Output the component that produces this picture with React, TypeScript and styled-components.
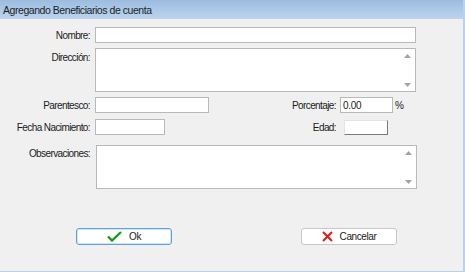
import React from 'react';
import styled, { createGlobalStyle } from 'styled-components';

const GlobalStyle = createGlobalStyle`
  html, body {
    margin: 0;
    padding: 0;
    background: #f0f0f0;
  }
  * {
    box-sizing: border-box;
  }
`;

const Window = styled.div`
  width: 465px;
  height: 272px;
  display: flex;
  flex-direction: column;
  background: #f0f0f0;
  border-right: 2px solid #b9d1ea;
  border-bottom: 1px solid #b9d1ea;
  font-family: 'Liberation Sans', Arial, sans-serif;
  color: #1b1b1b;
`;

const TitleBar = styled.div`
  height: 19px;
  display: flex;
  align-items: center;
  padding-left: 3px;
  background: linear-gradient(to bottom, #9cbcdf, #bcd5ee);
  font-size: 10.5px;
  letter-spacing: -0.45px;
  color: #1a1f26;
`;

const Form = styled.div`
  display: flex;
  flex-direction: column;
  padding-top: 8px;
`;

const Row = styled.div<{ $gap: number; $align?: string }>`
  display: flex;
  align-items: ${({ $align }) => $align || 'center'};
  margin-top: ${({ $gap }) => $gap}px;
`;

const Label = styled.div<{ $width?: number; $pad?: number }>`
  width: ${({ $width }) => $width ?? 90}px;
  text-align: right;
  flex-shrink: 0;
  font-size: 10px;
  letter-spacing: -0.6px;
  padding-top: ${({ $pad }) => $pad ?? 0}px;
`;

const Input = styled.input<{ $width: number; $ml?: number }>`
  width: ${({ $width }) => $width}px;
  height: 16px;
  margin: 0 0 0 ${({ $ml }) => $ml ?? 5}px;
  padding: 0 2px;
  border: 1px solid #b9b9b9;
  background: #fff;
  font-family: 'Liberation Sans', Arial, sans-serif;
  font-size: 10px;
  letter-spacing: -0.3px;
  color: #1b1b1b;
  outline: none;
`;

const Box = styled.div<{ $width: number; $height: number; $ml: number }>`
  width: ${({ $width }) => $width}px;
  height: ${({ $height }) => $height}px;
  margin-left: ${({ $ml }) => $ml}px;
  border: 1px solid #b9b9b9;
  background: #fff;
  display: flex;
  justify-content: flex-end;
`;

const ScrollTrack = styled.div`
  width: 16px;
  display: flex;
  flex-direction: column;
  justify-content: space-between;
  align-items: center;
  padding: 5px 0 4px;
`;

const RaisedBox = styled.div`
  width: 44px;
  height: 15px;
  margin-left: 8px;
  background: #fff;
  border-top: 1px solid #e3e3e3;
  border-left: 1px solid #e3e3e3;
  border-right: 1px solid #7a7a7a;
  border-bottom: 1px solid #7a7a7a;
`;

const Unit = styled.span`
  margin-left: 2px;
  font-size: 10px;
`;

const ButtonRow = styled.div`
  display: flex;
  margin-top: 39px;
  padding-left: 76px;
`;

const Button = styled.div<{ $primary?: boolean; $ml?: number }>`
  width: 96px;
  height: 17px;
  margin-left: ${({ $ml }) => $ml ?? 0}px;
  display: flex;
  align-items: center;
  justify-content: center;
  gap: 7px;
  background: #fff;
  border: 1px solid ${({ $primary }) => ($primary ? '#5ea2e0' : '#c8c8c8')};
  box-shadow: ${({ $primary }) => ($primary ? 'inset 0 0 0 1px #cfe4f7' : 'none')};
  border-radius: 3px;
  font-size: 10px;
  letter-spacing: -0.4px;
  color: #222;
`;

const Arrow = ({ up }: { up?: boolean }) => (
  <svg width="7" height="4" viewBox="0 0 7 4">
    <path d={up ? 'M0 4 L3.5 0 L7 4 Z' : 'M0 0 L3.5 4 L7 0 Z'} fill="#a3a3a3" />
  </svg>
);

const CheckIcon = () => (
  <svg width="15" height="11" viewBox="0 0 15 11">
    <path d="M1 5.5 L5 9.5 L14 1" fill="none" stroke="#1b9b1b" strokeWidth="2.4" />
  </svg>
);

const CrossIcon = () => (
  <svg width="11" height="11" viewBox="0 0 11 11">
    <path d="M1 1 L10 10 M10 1 L1 10" stroke="#e21b1b" strokeWidth="2" />
  </svg>
);

const MemoBox = ({ width, ml }: { width: number; ml: number }) => (
  <Box $width={width} $height={44} $ml={ml}>
    <ScrollTrack>
      <Arrow up />
      <Arrow />
    </ScrollTrack>
  </Box>
);

export default function App() {
  return (
    <Window>
      <GlobalStyle />
      <TitleBar>Agregando Beneficiarios de cuenta</TitleBar>
      <Form>
        <Row $gap={0}>
          <Label>Nombre:</Label>
          <Input $width={321} readOnly />
        </Row>
        <Row $gap={5} $align="flex-start">
          <Label $pad={4}>Dirección:</Label>
          <MemoBox width={321} ml={5} />
        </Row>
        <Row $gap={5}>
          <Label>Parentesco:</Label>
          <Input $width={114} readOnly />
          <Label $width={127}>Porcentaje:</Label>
          <Input $width={53} $ml={4} value="0.00" readOnly />
          <Unit>%</Unit>
        </Row>
        <Row $gap={6}>
          <Label>Fecha Nacimiento:</Label>
          <Input $width={70} readOnly />
          <Label $width={171}>Edad:</Label>
          <RaisedBox />
        </Row>
        <Row $gap={10} $align="flex-start">
          <Label $pad={3}>Observaciones:</Label>
          <MemoBox width={321} ml={6} />
        </Row>
        <ButtonRow>
          <Button $primary>
            <CheckIcon />
            <span>Ok</span>
          </Button>
          <Button $ml={129}>
            <CrossIcon />
            <span>Cancelar</span>
          </Button>
        </ButtonRow>
      </Form>
    </Window>
  );
}
